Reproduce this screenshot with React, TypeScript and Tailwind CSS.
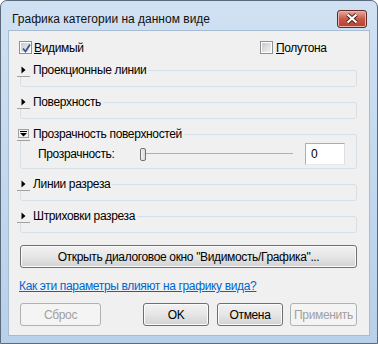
import React from "react";

function CheckBox({ checked }: { checked?: boolean }) {
  return (
    <span className="relative flex h-[13px] w-[13px] shrink-0 items-center justify-center border border-[#8e8f8f] bg-white">
      <span className="h-[9px] w-[9px] bg-gradient-to-br from-[#c6cbd1] to-[#f2f2f3]" />
      {checked && (
        <svg className="absolute left-[1px] top-[1px]" width="11" height="11" viewBox="0 0 11 11">
          <path d="M2 5.5 L4.5 8.5 L9 1.5" fill="none" stroke="#3d5591" strokeWidth="1.8" />
        </svg>
      )}
    </span>
  );
}

function ExpandButton({ open }: { open?: boolean }) {
  if (open) {
    return (
      <span className="flex h-[14px] w-[13px] items-center justify-center border-b border-[#a0a0a0]">
        <svg width="11" height="9" viewBox="0 0 11 9">
          <rect x="0.5" y="0.5" width="10" height="8" fill="none" stroke="#555" strokeDasharray="1 1" />
          <rect x="2" y="2" width="7" height="1" fill="#000" />
          <path d="M2 4 H9 L5.5 7.5 Z" fill="#000" />
        </svg>
      </span>
    );
  }
  return (
    <span className="flex h-[14px] w-[13px] items-center justify-center border-b border-[#a0a0a0]">
      <svg width="5" height="8" viewBox="0 0 5 8">
        <path d="M0.5 0.5 L4.5 4 L0.5 7.5 Z" fill="#000" />
      </svg>
    </span>
  );
}

function Group({
  title,
  open,
  children,
}: {
  title: string;
  open?: boolean;
  children?: React.ReactNode;
}) {
  return (
    <fieldset className="rounded-[3px] border border-[#d5dfe5]">
      <legend className="-ml-[4px] flex h-[14px] items-center gap-[3px] pr-[2px] leading-[14px]">
        <ExpandButton open={open} />
        <span>{title}</span>
      </legend>
      {children ?? <div className="h-[9px]" />}
    </fieldset>
  );
}

function Button({
  children,
  disabled,
  className,
}: {
  children: React.ReactNode;
  disabled?: boolean;
  className?: string;
}) {
  return (
    <button
      className={
        disabled
          ? `flex h-[23px] items-center justify-center rounded-[3px] border border-[#adb2b5] bg-[#f4f4f4] text-[#a0a0a0] ${className}`
          : `flex h-[23px] items-center justify-center rounded-[3px] border border-[#707070] bg-gradient-to-b from-[#f2f2f2] via-[#e6e6e6] to-[#d2d2d2] text-black shadow-[inset_0_0_0_1px_#fbfbfb] ${className}`
      }
    >
      {children}
    </button>
  );
}

export default function App() {
  return (
    <div className="flex h-[344px] w-[378px] flex-col rounded-t-[7px] border border-[#5a6b7d] bg-gradient-to-b from-[#d0e1f3] to-[#b8d0e9] font-['Liberation_Sans',sans-serif] text-[12px] text-black">
      {/* title bar */}
      <div className="flex h-[29px] items-center pl-[11px] pr-[10px] pt-[6px]">
        <span className="flex-1 text-[12px] text-[#111]">Графика категории на данном виде</span>
        <button className="flex h-[18px] w-[30px] items-center justify-center rounded-[3px] border border-[#5e2a25] bg-gradient-to-b from-[#e8a99e] via-[#c9584a] to-[#b5402f] shadow-[inset_0_0_0_1px_#e9b4aa]">
          <svg width="14" height="11" viewBox="0 0 14 11">
            <path d="M2.5 1.5 L11.5 9.5 M11.5 1.5 L2.5 9.5" stroke="#4a1f1b" strokeWidth="4" />
            <path d="M2.5 1.5 L11.5 9.5 M11.5 1.5 L2.5 9.5" stroke="#ffffff" strokeWidth="2.2" />
          </svg>
        </button>
      </div>

      {/* client area */}
      <div className="mx-[7px] mb-[7px] flex-1 border border-[#a6bcd2] bg-[#f0f0f0] pl-[11px] pr-[12px] tracking-[-0.35px]">
        <div className="mt-[10px] flex h-[13px] items-center">
          <label className="-ml-[1px] flex w-[241px] items-center gap-[2px]">
            <CheckBox checked />
            <span>
              <span className="underline">В</span>идимый
            </span>
          </label>
          <label className="flex items-center gap-[3px]">
            <CheckBox />
            <span>
              <span className="underline">П</span>олутона
            </span>
          </label>
        </div>

        <div className="mt-[9px] flex flex-col gap-[8px]">
          <Group title="Проекционные линии" />
          <Group title="Поверхность" />
          <Group title="Прозрачность поверхностей" open>
            <div className="flex items-center pb-[3px] pl-[17px] pt-[2px]">
              <span className="w-[102px]">Прозрачность:</span>
              <div className="relative flex h-[14px] w-[153px] items-center">
                <div className="h-[2px] w-full border-t border-[#b0b0b0] border-b-white" />
                <div className="absolute left-0 top-[1px] h-[13px] w-[6px] rounded-[2px] border border-[#707070] bg-gradient-to-r from-[#f4f4f4] to-[#d8d8d8]" />
              </div>
              <div className="ml-[12px] flex h-[22px] w-[40px] items-center border border-[#abadb3] border-b-[#e3e9ef] border-r-[#dbdfe6] bg-white pl-[5px]">
                0
              </div>
            </div>
          </Group>
          <Group title="Линии разреза" />
          <Group title="Штриховки разреза" />
        </div>

        <Button className="mt-[12px] w-full">
          Открыть диалоговое окно "Видимость/Графика"...
        </Button>

        <div className="mt-[11px] h-[15px] leading-[15px]">
          <a className="-ml-[1px] text-[#0066cc] underline" href="#">
            Как эти параметры влияют на графику вида?
          </a>
        </div>

        <div className="mt-[9px] flex">
          <Button disabled className="w-[81px]">
            Сброс
          </Button>
          <Button className="ml-[42px] w-[66px]">OK</Button>
          <Button className="ml-[8px] w-[66px]">Отмена</Button>
          <Button disabled className="ml-[7px] w-[67px]">
            Применить
          </Button>
        </div>
      </div>
    </div>
  );
}
